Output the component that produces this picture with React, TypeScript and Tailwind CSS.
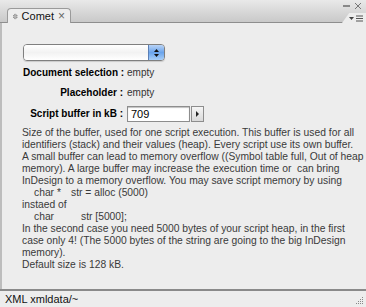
import React from "react";

const lines = [
  "Size of the buffer, used for one script execution. This buffer is used for all",
  "identifiers (stack) and their values (heap). Every script use its own buffer.",
  "A small buffer can lead to memory overflow ((Symbol table full, Out of heap",
  "memory). A large buffer may increase the execution time or  can bring",
  "InDesign to a memory overflow. You may save script memory by using",
];

const lines2 = [
  "In the second case you need 5000 bytes of your script heap, in the first",
  "case only 4! (The 5000 bytes of the string are going to the big InDesign",
  "memory).",
  "Default size is 128 kB.",
];

function InfoRow({ label, children }: { label: string; children: React.ReactNode }) {
  return (
    <div className="flex items-center h-[14px]">
      <div className="w-[100px] text-right font-bold text-black whitespace-nowrap">{label}</div>
      <div className="pl-[4px] text-[#333]">{children}</div>
    </div>
  );
}

export default function App() {
  return (
    <div
      className="w-[366px] h-[307px] flex flex-col bg-[#ededed] text-[10px] leading-[14px] overflow-hidden"
      style={{ fontFamily: '"Lucida Grande", "Liberation Sans", Arial, sans-serif' }}
    >
      {/* Tab bar */}
      <div className="relative h-[23px] flex items-end bg-gradient-to-b from-[#e9e9e9] to-[#c9c9c9] border-b border-[#8e8e8e] shrink-0">
        <div className="ml-[7px] h-[15px] w-[64px] -mb-px flex items-center gap-[4px] px-[5px] bg-[#ededed] border border-b-0 border-[#9a9a9a] rounded-t-[4px] text-[11px]">
          <svg width="7" height="9" viewBox="0 0 7 9" className="text-[#555]">
            <path d="M3.5 0.5 L6.5 3.5 L0.5 3.5 Z M3.5 8.5 L6.5 5.5 L0.5 5.5 Z" fill="none" stroke="currentColor" strokeWidth="0.9" />
          </svg>
          <span className="text-[#111]">Comet</span>
          <span className="text-[#666] text-[12px] leading-none">×</span>
        </div>
        <div className="absolute right-[4px] top-[2px] flex items-center gap-[4px] text-[#777]">
          <div className="w-[7px] h-[2px] bg-[#888]" />
          <svg width="8" height="8" viewBox="0 0 8 8">
            <path d="M1 1 L7 7 M7 1 L1 7" stroke="#777" strokeWidth="1" />
          </svg>
        </div>
        <div className="absolute right-0 bottom-[-1px] w-[24px] h-[10px] bg-[#ededed] [clip-path:polygon(30%_0,100%_0,100%_100%,0_100%)] flex items-center justify-end pr-[3px] gap-[2px]">
          <svg width="5" height="3" viewBox="0 0 5 3"><path d="M0 0 H5 L2.5 3 Z" fill="#444" /></svg>
          <svg width="7" height="7" viewBox="0 0 7 7"><path d="M0 1 H7 M0 3.5 H7 M0 6 H7" stroke="#555" strokeWidth="1" /></svg>
        </div>
      </div>

      {/* Body */}
      <div className="flex-1 flex flex-col border-l-2 border-[#bdbdbd] pl-[21px] pt-[21px]">
        {/* Dropdown */}
        <div className="w-[142px] h-[17px] flex rounded-[4px] border border-[#7f7f7f] overflow-hidden shadow-[0_1px_1px_rgba(0,0,0,0.15)]">
          <div className="flex-1 bg-gradient-to-b from-[#ffffff] via-[#f2f2f2] to-[#ffffff]" />
          <div className="w-[16px] flex flex-col items-center justify-center gap-[2px] bg-gradient-to-b from-[#b9d3f5] via-[#6aa4ec] to-[#a9cff8] border-l border-[#5b7fb5]">
            <svg width="5" height="3" viewBox="0 0 5 3"><path d="M2.5 0 L5 3 H0 Z" fill="#111" /></svg>
            <svg width="5" height="3" viewBox="0 0 5 3"><path d="M0 0 H5 L2.5 3 Z" fill="#111" /></svg>
          </div>
        </div>

        <div className="mt-[5px] flex flex-col">
          <InfoRow label="Document selection :">empty</InfoRow>
          <div className="mt-[6px]">
            <InfoRow label="Placeholder :">empty</InfoRow>
          </div>
          <div className="mt-[6px] flex items-center h-[16px]">
            <div className="w-[100px] text-right font-bold text-black whitespace-nowrap">Script buffer in kB :</div>
            <div className="ml-[4px] w-[63px] h-[16px] bg-white border border-[#8d8d8d] shadow-[inset_0_1px_1px_rgba(0,0,0,0.25)] pl-[3px] flex items-center text-[11px] text-black">
              709
            </div>
            <div className="ml-[1px] w-[13px] h-[16px] border border-[#8d8d8d] bg-gradient-to-b from-[#f5f5f5] to-[#dadada] flex items-center justify-center">
              <svg width="3" height="6" viewBox="0 0 3 6"><path d="M0 0 L3 3 L0 6 Z" fill="#222" /></svg>
            </div>
          </div>
        </div>

        {/* Help text */}
        <div className="mt-[5px] -ml-[1px] text-[10.3px] leading-[12px] text-[#3a3a3a] whitespace-nowrap">
          {lines.map((l) => (
            <div key={l} className="whitespace-pre">{l}</div>
          ))}
          <div className="flex pl-[12px]">
            <span className="w-[37px]">char *</span>
            <span>str = alloc (5000)</span>
          </div>
          <div>instaed of</div>
          <div className="flex pl-[12px]">
            <span className="w-[47px]">char</span>
            <span>str [5000];</span>
          </div>
          {lines2.map((l) => (
            <div key={l}>{l}</div>
          ))}
        </div>
      </div>

      {/* Status bar */}
      <div className="relative h-[18px] shrink-0 border-t-2 border-[#8a8a8a] pl-[5px] flex items-center text-[11px] text-[#111]">
        XML xmldata/~
        <svg className="absolute right-[2px] bottom-[2px]" width="9" height="9" viewBox="0 0 9 9">
          {[
            [7, 1], [5, 3], [7, 3], [3, 5], [5, 5], [7, 5], [1, 7], [3, 7], [5, 7], [7, 7],
          ].map(([x, y]) => (
            <rect key={`${x}-${y}`} x={x} y={y} width="1" height="1" fill="#888" />
          ))}
        </svg>
      </div>
    </div>
  );
}
